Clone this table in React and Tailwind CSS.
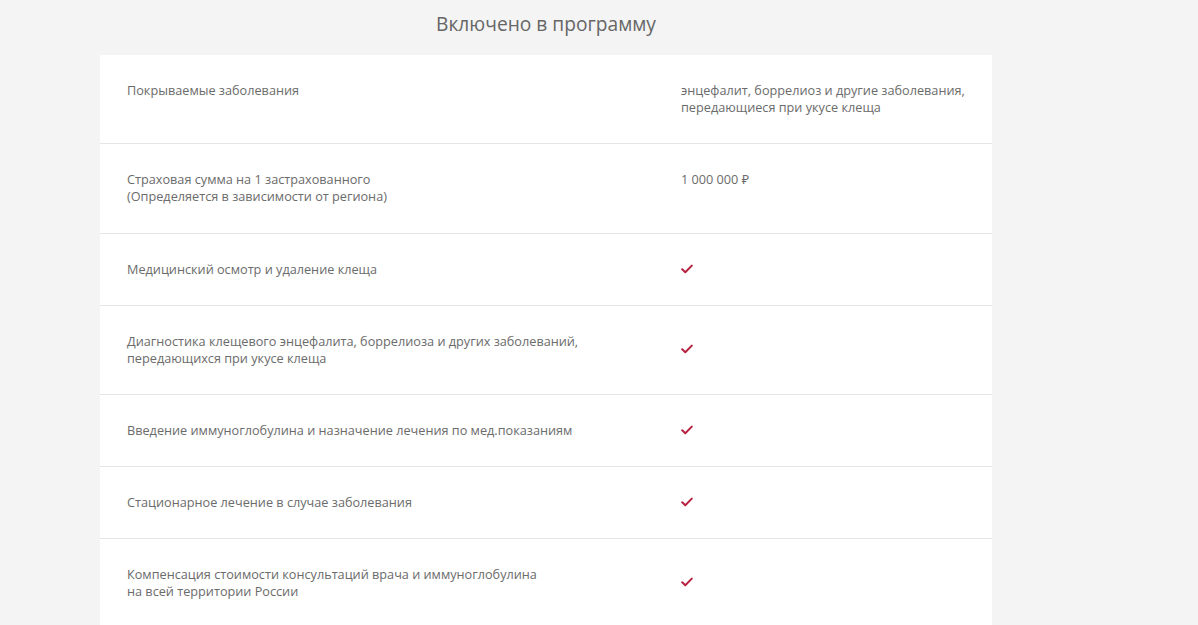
import React from "react";

const rows = [
  { l: ["Покрываемые заболевания"], r: ["энцефалит, боррелиоз и другие заболевания,", "передающиеся при укусе клеща"] },
  { l: ["Страховая сумма на 1 застрахованного", "(Определяется в зависимости от региона)"], r: ["1 000 000 ₽"], extra: true },
  { l: ["Медицинский осмотр и удаление клеща"], check: true },
  { l: ["Диагностика клещевого энцефалита, боррелиоза и других заболеваний,", "передающихся при укусе клеща"], check: true },
  { l: ["Введение иммуноглобулина и назначение лечения по мед.показаниям"], check: true },
  { l: ["Стационарное лечение в случае заболевания"], check: true },
  { l: ["Компенсация стоимости консультаций врача и иммуноглобулина", "на всей территории России"], check: true },
];

function Check() {
  return (
    <svg width="12" height="10" viewBox="0 0 12 10" className="block mb-[2px]">
      <path d="M1.2 5.2 L4.3 8.2 L10.8 1.6" fill="none" stroke="#b5213f" strokeWidth="2" strokeLinecap="round" strokeLinejoin="round" />
    </svg>
  );
}

export default function App() {
  return (
    <div className="min-h-screen bg-[#f4f4f4] text-[#6b6b6b]" style={{ fontFamily: '"Open Sans", "Noto Sans", sans-serif' }}>
      <div className="ml-[100px] w-[892px]">
        <div className="h-[55px] pt-[10px] text-center text-[19.2px] leading-[28px] text-[#666]">Включено в программу</div>
        <div className="bg-white">
          {rows.map((row, i) => (
            <div
              key={i}
              className={`grid grid-cols-[581px_1fr] pt-[27px] text-[12.7px] leading-[17px] ${row.extra ? "pb-[28px]" : "pb-[27px]"} ${row.check ? "items-center" : "items-start"} ${i > 0 ? "border-t border-[#e5e5e5]" : ""}`}
            >
              <div className="pl-[27px]">
                {row.l.map((t, j) => (
                  <div key={j}>{t}</div>
                ))}
              </div>
              <div className="pr-[20px]">
                {row.check ? (
                  <Check />
                ) : (
                  row.r.map((t, j) => <div key={j}>{t}</div>)
                )}
              </div>
            </div>
          ))}
        </div>
      </div>
    </div>
  );
}
